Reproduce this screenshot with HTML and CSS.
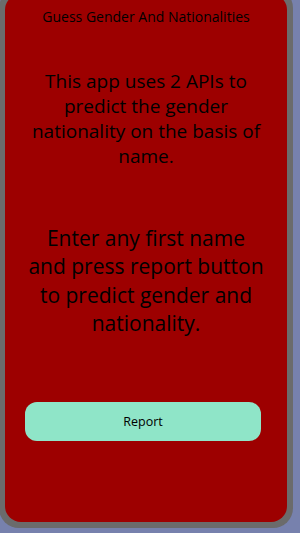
FILE: index.html
```html
<!DOCTYPE html>
<html lang="en">

<head>
    <meta charset="UTF-8">
    <meta name="viewport" content="width=device-width, initial-scale=1.0">
    <link rel="stylesheet" href="styles.css">
    <title>Guess Gender And Nationalities</title>
</head>

<body>
    <div class="frame">
        <div class="card">
            <h1 class="title">Guess Gender And Nationalities</h1>
            <p class="intro">This app uses 2 APIs to<br>predict the gender<br>nationality on the basis of<br>name.</p>
            <p class="hint">Enter any first name<br>and press report button<br>to predict gender and<br>nationality.</p>
            <button class="btn-report" type="button">Report</button>
        </div>
    </div>
</body>

</html>
```

FILE: styles.css
```css
* {
    margin: 0;
    padding: 0;
    box-sizing: border-box;
}

body {
    background-color: #7781ad;
    font-family: "Open Sans", "Noto Sans", sans-serif;
    color: #000;
    overflow: hidden;
}

.frame {
    margin: -12px 0 0 -1px;
    width: 294px;
    height: 540px;
    padding: 6px;
    border-radius: 20px;
    background-color: #6b6b6b;
}

.card {
    height: 100%;
    padding-top: 13px;
    border-radius: 16px;
    background-color: #9d0000;
    display: flex;
    flex-direction: column;
    align-items: center;
    text-align: center;

    .title {
        font-size: 14px;
        font-weight: normal;
        line-height: 20px;
    }

    .intro {
        margin-top: 42px;
        font-size: 19px;
        line-height: 25px;
    }

    .hint {
        margin-top: 55px;
        font-size: 21px;
        line-height: 28.3px;
    }

    .btn-report {
        align-self: flex-start;
        margin: 65px 0 0 20px;
        width: 236px;
        height: 39px;
        border: none;
        border-radius: 12px;
        background-color: #8fe5c8;
        font-family: inherit;
        font-size: 12.5px;
        color: #000;
        cursor: pointer;
    }
}
```
